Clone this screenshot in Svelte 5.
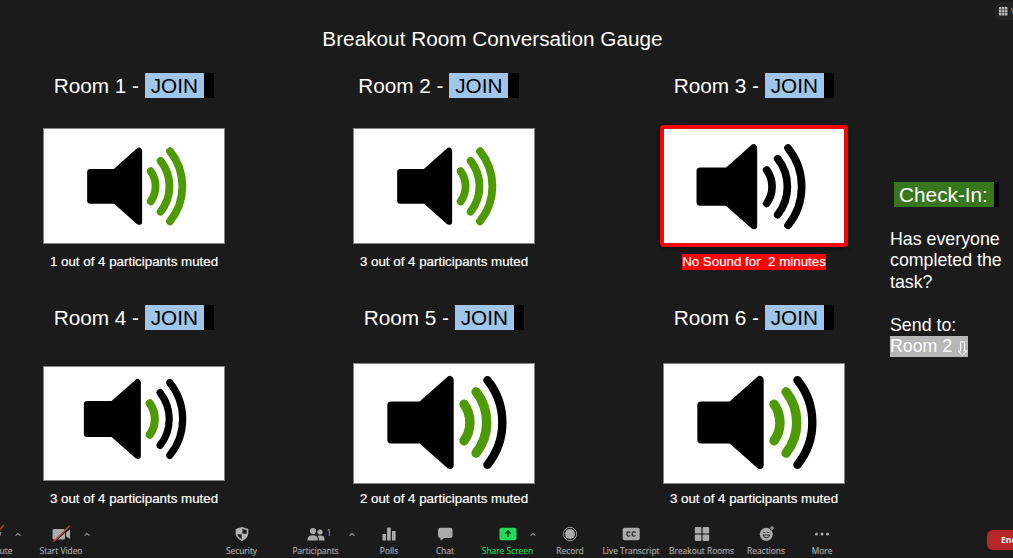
<script>
  const rooms = [
    { n: 1, green: 3, k: 0.906, x: 44.3, y: 58.3, h: 116, note: '1 out of 4 participants muted' },
    { n: 2, green: 3, k: 0.906, x: 44.3, y: 58.3, h: 116, note: '3 out of 4 participants muted', wide: true },
    { n: 3, green: 0, k: 1, x: 33.7, y: 58.7, h: 116, note: 'No Sound for \u00a02 minutes', alert: true },
    { n: 4, green: 1, k: 0.94, x: 41, y: 53, h: 115, note: '3 out of 4 participants muted' },
    { n: 5, green: 2, k: 1.094, x: 34.5, y: 59.5, h: 121, note: '2 out of 4 participants muted' },
    { n: 6, green: 2, k: 1.094, x: 34.5, y: 59.5, h: 121, note: '3 out of 4 participants muted' }
  ];
  const waves = [
    'M210-50A86 86 0 0 1 210 50',
    'M243-84A136 136 0 0 1 243 84',
    'M274-116A185 185 0 0 1 274 116'
  ];
  const tools = [
    { id: 'mute', label: 'Mute' },
    { id: 'video', label: 'Start Video', caret: 25.5 },
    { id: 'space', label: '' },
    { id: 'security', label: 'Security' },
    { id: 'people', label: 'Participants', caret: 36.5 },
    { id: 'polls', label: 'Polls' },
    { id: 'chat', label: 'Chat' },
    { id: 'share', label: 'Share Screen', caret: 25.5 },
    { id: 'record', label: 'Record' },
    { id: 'cc', label: 'Live Transcript' },
    { id: 'breakout', label: 'Breakout Rooms' },
    { id: 'react', label: 'Reactions' },
    { id: 'more', label: 'More' }
  ];
</script>

<div class="screen">
  <div class="view">
    <svg width="9" height="9" viewBox="0 0 9 9" fill="#b5b5b5">
      {#each [0, 3, 6] as y}{#each [0, 3, 6] as x}<rect {x} {y} width="2.5" height="2.5" />{/each}{/each}
    </svg>
    <span>View</span>
  </div>

  <h1>Breakout Room Conversation Gauge</h1>

  <main>
    <section class="rooms">
      {#each rooms as r}
        <article class:second={r.n > 3}>
          <h2 class:wide={r.wide}>Room {r.n} -&nbsp;<button>JOIN</button><i></i></h2>
          <div class="slot">
            <div class="card" class:alert={r.alert} style="height:{r.h}px">
              <svg width="180" height={r.h - 2}>
                <g transform="translate({r.x - 1} {r.y - 1}) scale({r.k / 3})">
                  <path d="M10-47H92L171-117V117L92 47H10Z" stroke="#000" stroke-width="21" stroke-linejoin="round" />
                  {#each waves as d, i}
                    <path {d} fill="none" stroke={i < r.green ? '#4e9a06' : '#000'} stroke-width={i < r.green ? 26 : 23} stroke-linecap="round" />
                  {/each}
                </g>
              </svg>
            </div>
          </div>
          <p><span class:red={r.alert}>{r.note}</span></p>
        </article>
      {/each}
    </section>

    <aside>
      <h3><b>Check-In:</b><i></i></h3>
      <div>Has everyone<br />completed the<br />task?<br /><br />Send to:</div>
      <div class="pick"><span>Room 2</span><svg width="11" height="15" viewBox="0 0 11 15" fill="none" stroke="#fff"><path d="M3.5.8H7.5V10H10L5.5 14L1 10H3.5Z" /></svg></div>
    </aside>
  </main>

  <footer>
    {#each tools as t}
      <div class="tool {t.id}">
        <div class="icon">
          {#if t.id === 'mute'}
            <svg width="26" height="20" viewBox="0 0 26 20" fill="none"><path d="M0 11.5Q.7 9.5 .7 8" stroke="#aaa" /><path d="M-8 14L4 1" stroke="#d04444" stroke-width="1.2" /></svg>
          {:else if t.id === 'video'}
            <svg width="24" height="20" viewBox="0 0 24 20"><rect x="3.5" y="5" width="12.5" height="10.5" rx="1.5" fill="#aaa" /><path d="M17 8.5L21 5.5V15L17 12.2Z" fill="#aaa" /><path d="M5.200 18.200L21.200 2.700" stroke="#1b1b1b" stroke-width="1.200" /><path d="M4.5 17.5L20.5 2" stroke="#d04444" stroke-width="1.3" /></svg>
          {:else if t.id === 'security'}
            <svg width="20" height="20" viewBox="0 0 20 20"><path d="M10 3L16.300 5V9.500Q15.800 14.500 10 17Q4.200 14.500 3.700 9.500V5Z" fill="#b3b3b3" /><path d="M10.400 4.800L14.800 6.200V9.800H10.400ZM9.600 10.200V15.300Q5.800 13 5.200 10.200Z" fill="#202020" /></svg>
          {:else if t.id === 'people'}
            <svg width="24" height="20" viewBox="0 0 24 20" fill="#aaa"><circle cx="9" cy="7" r="3.100" /><circle cx="16" cy="8" r="2.600" /><path d="M3.500 16.500V15Q4 11.200 8.800 11.200T13.800 15V16.500ZM14.800 16.500V14.500Q14.600 12.800 13.500 11.800Q20.500 10.500 20.500 15V16.500Z" /></svg>
            <em>1</em>
          {:else if t.id === 'polls'}
            <svg width="20" height="20" viewBox="0 0 20 20" fill="#aaa"><rect x="3.500" y="10" width="3.500" height="6.500" rx=".6" /><rect x="8.100" y="3.500" width="3.700" height="13" rx=".6" /><rect x="13" y="7" width="3.600" height="9.500" rx=".6" /></svg>
          {:else if t.id === 'chat'}
            <svg width="20" height="20" viewBox="0 0 20 20" fill="#aaa"><path d="M5.500 3.800H15Q17.500 3.800 17.500 6.200V11.500Q17.500 14 15 14H9.200L5.500 16.800V14Q3 14 3 11.500V6.200Q3 3.800 5.500 3.800Z" /></svg>
          {:else if t.id === 'share'}
            <svg width="20" height="20" viewBox="0 0 20 20"><rect x="1.500" y="3.800" width="17" height="12.500" rx="1.800" fill="#22d95b" /><path d="M10 13V7.500M7.300 9.700L10 7L12.700 9.700" fill="none" stroke="#14351d" stroke-width="1.400" /></svg>
          {:else if t.id === 'record'}
            <svg width="20" height="20" viewBox="0 0 20 20"><circle cx="10" cy="10" r="6.700" fill="none" stroke="#999" /><circle cx="10" cy="10" r="5" fill="#aaa" /></svg>
          {:else if t.id === 'cc'}
            <svg width="20" height="20" viewBox="0 0 20 20"><rect x="1.700" y="3.800" width="17" height="12.500" rx="1.800" fill="#aaa" /><path d="M9.300 8.700Q8.800 7.900 7.700 7.900Q5.900 7.900 5.900 10T7.700 12.100Q8.800 12.100 9.300 11.300M14.500 8.700Q14 7.900 12.900 7.900Q11.100 7.900 11.100 10T12.900 12.100Q14 12.100 14.500 11.300" fill="none" stroke="#292929" stroke-width="1.200" /></svg>
          {:else if t.id === 'breakout'}
            <svg width="20" height="20" viewBox="0 0 20 20" fill="#aaa"><rect x="2.800" y="3" width="6.600" height="6.400" rx="1" /><rect x="10.600" y="3" width="6.600" height="6.400" rx="1" /><rect x="2.800" y="10.600" width="6.600" height="6.400" rx="1" /><rect x="10.600" y="10.600" width="6.600" height="6.400" rx="1" /></svg>
          {:else if t.id === 'react'}
            <svg width="20" height="20" viewBox="0 0 20 20"><circle cx="10.300" cy="10.300" r="6.500" fill="#aaa" /><g fill="none" stroke="#252525" stroke-width=".9"><path d="M7.200 9L8.200 8L9.200 9M11.300 9L12.300 8L13.300 9" /><path d="M7 11H13.600Q13 13.800 10.300 13.800T7 11Z" /></g><path d="M16 2V6M14 4H18" stroke="#1b1b1b" stroke-width="2.400" /><path d="M16 2V6M14 4H18" stroke="#aaa" stroke-width="1.200" /></svg>
          {:else if t.id === 'more'}
            <svg width="20" height="20" viewBox="0 0 20 20" fill="#aaa"><circle cx="4.500" cy="10" r="1.500" /><circle cx="10" cy="10" r="1.500" /><circle cx="15.500" cy="10" r="1.500" /></svg>
          {/if}
        </div>
        <span>{t.label}</span>
        {#if t.caret || t.id === 'mute'}
          <svg class="caret" style="left:{t.caret ? `calc(50% + ${t.caret}px)` : '18px'}" width="7" height="5" viewBox="0 0 7 5" fill="none" stroke="#999" stroke-width="1.100"><path d="M1 3.700L3.500 1.500L6 3.700" /></svg>
        {/if}
      </div>
    {/each}
    <button class="end">End</button>
  </footer>
</div>

<style>
  :global(body) { margin: 0; background: #1b1b1b; }
  .screen { box-sizing: border-box; position: relative; width: 1013px; height: 558px; overflow: hidden; background: #1b1b1b; color: #fff; font-family: "Liberation Sans", Arial, sans-serif; display: flex; flex-direction: column; }
  h1, h2, h3, p { margin: 0; font-weight: 400; white-space: nowrap; }
  h1 { font-size: 20.75px; line-height: 25px; padding-top: 26px; width: 985px; text-align: center; }
  main { display: flex; padding: 22px 0 0 43px; height: 466px; box-sizing: border-box; }
  .rooms { display: grid; grid-template-columns: repeat(3, 182px); grid-template-rows: 232px 210px; column-gap: 128px; width: 802px; flex: none; }
  article { display: flex; flex-direction: column; align-items: center; }
  h2, h3 { display: flex; font-size: 20.75px; line-height: 25px; height: 25px; }
  .wide { padding-right: 11px; }
  h2 button { width: 59px; height: 25px; padding: 0; border: 0; background: #9fc5e8; color: #000; font: inherit; line-height: 25px; }
  h2 i { width: 10.5px; background: #000; }
  .slot { height: 146px; display: flex; align-items: flex-end; }
  .second .slot { height: 154px; }
  article.second:nth-child(4) .slot { height: 151px; margin-bottom: 3px; }
  .card { box-sizing: border-box; width: 182px; border: 1px solid #858585; background: #fff; }
  .card svg { display: block; }
  .alert { outline: 3px solid #f00; border-color: #e41111; box-shadow: 0 2px 5px 3px #0008; border-radius: 1px; }
  p { font-size: 13.33px; line-height: 16px; margin-top: 10px; -webkit-text-stroke: .2px #fff; }
  .second p { margin-top: 7px; }
  p span { display: block; }
  .red { background: #f00; }
  aside { padding: 109px 0 0 45px; width: 123px; font-size: 17.8px; line-height: 21.4px; white-space: nowrap; }
  h3 { margin: 0 0 22px 3.5px; }
  h3 b { width: 100px; background: #38761d; text-align: center; font-weight: 400; }
  h3 i { width: 5.5px; background: #000; }
  .pick { display: flex; align-items: center; justify-content: space-between; width: 78px; height: 21px; background: #b7b7b7; }
  .pick svg { margin-top: 3px; }
  .view { position: absolute; left: 995px; top: 2px; width: 40px; height: 18px; border-radius: 5px; background: #222; display: flex; align-items: center; gap: 3px; padding-left: 4px; font: 9px "Open Sans", sans-serif; color: #aaa; }
  footer { display: grid; grid-template-columns: 26px 70px 110px 71px 77px 70px 42px 83px 42px 80px 61px 68px 44px 1fr; height: 41px; padding-top: 7px; box-sizing: border-box; font: 8.4px/12px "Open Sans", "Noto Sans", sans-serif; color: #b0b0b0; }
  .tool { position: relative; display: flex; flex-direction: column; align-items: center; white-space: nowrap; min-width: 0; }
  .tool > span { margin-top: 1px; -webkit-text-stroke: .15px currentColor; }
  .icon { height: 20px; position: relative; }
  .icon svg { display: block; }
  .icon em { position: absolute; left: 23px; top: 3px; font: 9px/12px "Open Sans", sans-serif; }
  .mute { align-items: flex-start; }
  .mute > span { margin-left: -8px; }
  .caret { position: absolute; top: 8px; transform: translateX(-50%); }
  .tool.share { color: #22d95b; }
  .end { justify-self: end; width: 26px; height: 20px; margin-top: 6px; padding: 0 0 0 14px; border: 0; border-radius: 6px 0 0 6px; background: #b92626; color: #eee; font: 700 8.6px/20px "Open Sans", sans-serif; text-align: left; overflow: hidden; }
</style>
